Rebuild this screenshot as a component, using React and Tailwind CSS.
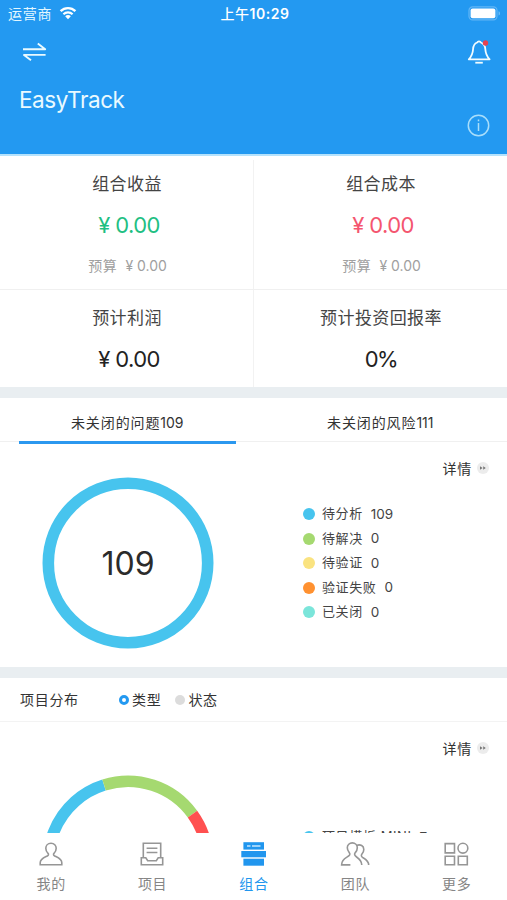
import React, { useState } from 'react';

const issueLegend = [
  { label: '待分析', value: 109, dot: 'bg-[#47c4ee]' },
  { label: '待解决', value: 0, dot: 'bg-[#a5d970]' },
  { label: '待验证', value: 0, dot: 'bg-[#fae380]' },
  { label: '验证失败', value: 0, dot: 'bg-[#ff9130]' },
  { label: '已关闭', value: 0, dot: 'bg-[#7be5da]' },
];

// Point on a circle, angle in degrees clockwise from the top
const point = (cx, cy, r, deg) => {
  const a = (deg * Math.PI) / 180;
  return `${cx + r * Math.sin(a)} ${cy - r * Math.cos(a)}`;
};

const arc = (from, to) =>
  `M${point(86, 86, 79.7, from)} A79.7 79.7 0 0 1 ${point(86, 86, 79.7, to)}`;

const StatusBar = () => (
  <div className="grid grid-cols-3 items-center h-[27px] pl-[8px] pr-[6px] text-white text-[14px]">
    <div className="flex items-center gap-[7px] text-[#e2f7ff]">
      <span className="tracking-[0.8px]">运营商</span>
      <svg width="18" height="14" viewBox="0 0 18 14" className="-mt-px">
        <path d="M1.6 5.1a10.6 10.6 0 0 1 14.8 0" fill="none" stroke="#fff" strokeWidth="2.4" />
        <path d="M4.4 8.2a6.6 6.6 0 0 1 9.2 0" fill="none" stroke="#fff" strokeWidth="2.1" />
        <path d="M6.2 10.2a3.9 3.9 0 0 1 5.6 0L9 13.2z" fill="#fff" />
      </svg>
    </div>
    <div className="text-center font-semibold whitespace-nowrap text-[14px] tracking-[0.5px] pl-px">
      <span className="font-medium">上午</span>10:29
    </div>
    <div className="flex justify-end">
      <svg width="33" height="15" viewBox="0 0 33 15">
        <rect x="1" y="0.9" width="28" height="13" rx="3.6" fill="none" stroke="#62b6f6" strokeWidth="1.2" />
        <rect x="2.6" y="2.6" width="24.8" height="9.6" rx="2" fill="#fff" />
        <path d="M30.6 5.2c1.7.6 1.7 3.8 0 4.4z" fill="#78c2f8" />
      </svg>
    </div>
  </div>
);

const Header = () => (
  <header className="h-[156px] bg-[#2399f1] border-b-2 border-[#b5e2fc]">
    <StatusBar />
    <div className="flex justify-between items-start h-[58px] pl-[22px] pr-[15px] pt-[12px]">
      <svg width="25" height="24" viewBox="0 0 25 24" fill="none" stroke="#eafaff" strokeWidth="1.9">
        <path d="M1 10.3h22.2L15.8 4.6" strokeLinejoin="round" />
        <path d="M23.6 15.9H2l7 5.4" strokeLinejoin="round" />
      </svg>
      <svg width="26" height="26" viewBox="0 0 26 26" fill="none" stroke="#f2fcff" strokeWidth="1.8">
        <path
          d="M13 2.3c-1 0-1.2.8-1.9 1.2C8.5 4.6 7.3 6.9 7.100 10c-.3 4.6-.8 6.600-4.300 10.300h20.800c-3.500-3.700-4-5.700-4.300-10.300-.2-3.100-1.700-5.400-4.400-6.500C14.200 3.100 14 2.300 13 2.300z"
          strokeLinejoin="round"
        />
        <path d="M9.300 23.700h7.500" />
        <circle cx="19.500" cy="4" r="2.700" fill="#e8424f" stroke="none" />
      </svg>
    </div>
    <div className="flex justify-between pl-[19px] pr-[17px]">
      <h1 className="text-[22.5px] leading-[30px] tracking-[-0.450px] text-[#eafaff]">EasyTrack</h1>
      <svg width="23" height="23" viewBox="0 0 23 23" fill="none" stroke="#a9defb" strokeWidth="1.5" className="mt-[29px]">
        <circle cx="11.500" cy="11.500" r="10.200" />
        <path d="M11.500 9v8M11.500 5.400v1.900" />
      </svg>
    </div>
  </header>
);

const Stat = ({ title, value, color, budget }) => (
  <div className="flex-1 flex flex-col items-center pl-px">
    <div className="text-[17px] leading-[24px] tracking-[0.4px] text-[#444]">{title}</div>
    <div className={`mt-[13px] text-[22px] leading-[32px] ${color}`}>{value}</div>
    {budget && (
      <div className="mt-[15px] pl-px text-[14px] leading-[20px] text-[#a0a0a0] whitespace-pre">
        <span className="tracking-[0.7px]">预算</span>
        {'  ' + budget}
      </div>
    )}
  </div>
);

const Details = () => (
  <div className="flex items-center justify-end gap-[5px] pr-[18px] h-[20px] text-[14px] tracking-[0.7px] text-[#333]">
    详情
    <svg width="12" height="12" viewBox="0 0 12 12">
      <circle cx="6" cy="6" r="6" fill="#ececec" />
      <path d="M3 4.200L5.600 6 3 7.800zM6.200 4.200L8.800 6 6.200 7.800z" fill="#777" />
    </svg>
  </div>
);

const Legend = ({ items }) => (
  <div className="flex flex-col gap-[4.500px]">
    {items.map((item) => (
      <div key={item.label} className="flex items-center h-[20px] text-[13px] text-[#444] whitespace-nowrap">
        <span className={`size-[12px] rounded-full mr-[7px] ${item.dot}`}></span>
        <span className="tracking-[0.6px]">{item.label}</span>
        <span className="ml-[8px] text-[13.500px]">{item.value}</span>
      </div>
    ))}
  </div>
);

const tabs = [
  {
    name: '我的',
    icon: (
      <path d="M13 2.200c-3.200 0-5.200 2.300-5.200 5.100 0 2.400 1 3.900 2.200 5 .9 1 .5 2.100-.7 2.700C6 16.600 2.200 17.800 2.200 21.800v2h21.600v-2c0-4-3.800-5.200-7.100-6.800-1.200-.6-1.600-1.700-.7-2.700 1.200-1.100 2.200-2.600 2.200-5 0-2.800-2-5.100-5.200-5.100z" />
    ),
  },
  {
    name: '项目',
    icon: (
      <g>
        <path d="M4.300 16V2.200h17.400V16" />
        <path d="M7.600 7.200h10.800M7.600 11.500h10.800" />
        <path d="M2.300 23.800v-7h4.500l1.900 3h8.600l1.900-3h4.500v7z" />
      </g>
    ),
  },
  {
    name: '组合',
    icon: (
      <g stroke="none" fill="#2196ee">
        <path d="M3.400 1.200h20.600v7.400H3.400z" />
        <path d="M1.300 10h24.700v6.300H1.300z" />
        <path d="M3.400 17.700h20.600v7H3.400z" />
        <path d="M7 4.200h3.500v1.500H7zM12 4.200h8.500v1.500H12z" fill="#c5e6fd" />
      </g>
    ),
  },
  {
    name: '团队',
    icon: (
      <g>
        <path d="M8.400 23.900H-.4c0-4 2.100-6 5.300-7.800 2.900-1.600 3.800-2.700 2.300-4.700-1.200-1.600-1.900-2.900-1.900-4.700 0-2.900 2.200-4.800 5-4.800s5 1.900 5 4.800c0 2.200-.8 3.600-2 4.900-1.200 1.600-.9 2.900 1.300 4.400 2.800 1.900 5.100 4 5.200 8" />
        <path d="M14.600 4.400c3.900-1.500 7.200.6 7.200 4 0 2-.8 3.200-1.700 4.300-1.200 1.600-1 2.800 1 4.100 3.200 1.900 5.600 3.600 5.600 7.200" />
      </g>
    ),
  },
  {
    name: '更多',
    icon: (
      <g>
        <path d="M2.200 2.600h9.300v9.300H2.200zM2.200 15.300h9.300v8.500H2.200zM15.300 15.300h9v8.500h-9z" />
        <circle cx="19.900" cy="7.200" r="4.900" />
      </g>
    ),
  },
];

const TabBar = () => (
  <nav className="grid grid-cols-5 h-[67px] bg-white shrink-0">
    {tabs.map((tab) => (
      <div key={tab.name} className="flex flex-col items-center pt-[8px]">
        <svg width="26" height="26" viewBox="0 0 26 26" fill="none" stroke="#969696" strokeWidth="1.600" overflow="visible">
          {tab.icon}
        </svg>
        <span
          className={
            'mt-[7px] pl-px text-[14px] leading-[20px] tracking-[0.7px] ' +
            (tab.name === '组合' ? 'text-[#2196ee]' : 'text-[#858585]')
          }
        >
          {tab.name}
        </span>
      </div>
    ))}
  </nav>
);

const App = () => {
  const [group, setGroup] = useState('类型');

  return (
    <div className="w-[507px] h-[900px] flex flex-col overflow-hidden bg-white font-['Inter','Noto_Sans_CJK_SC',sans-serif]">
      <Header />

      <main className="flex-1 min-h-0 overflow-hidden">
        <section className="divide-y divide-[#f0f0f0]">
          <div className="flex h-[134px] pt-[16px]">
            <Stat title="组合收益" value="¥ 0.00" color="text-[#1fbf83] tracking-[-0.6px] pl-[4px]" budget="¥ 0.00" />
            <div className="w-px -mt-[12px] bg-[#f2f2f2]"></div>
            <Stat title="组合成本" value="¥ 0.00" color="text-[#f4556f] tracking-[-0.6px] pl-[4px]" budget="¥ 0.00" />
          </div>
          <div className="flex h-[97px] pt-[16px]">
            <Stat title="预计利润" value="¥ 0.00" color="text-[#222] tracking-[-0.6px] pl-[4px]" />
            <div className="w-px -mt-[16px] bg-[#f2f2f2]"></div>
            <Stat title="预计投资回报率" value="0%" color="text-[#222] tracking-[-1.6px]" />
          </div>
        </section>

        <div className="h-[11px] bg-[#e9eef1]"></div>

        <section className="h-[269px]">
          <div className="grid grid-cols-2 h-[44px] border-b border-[#f0f0f0] text-[14px] text-[#333]">
            <div className="pl-[19px] pr-[18px]">
              <div className="h-[46px] flex items-center justify-center border-b-[3px] border-[#2b98ef]">
                <span className="pt-[5px]"><span className="tracking-[0.9px]">未关闭的问题</span>109</span>
              </div>
            </div>
            <div className="h-[46px] pt-[2px] flex items-center justify-center">
              <span><span className="tracking-[0.9px]">未关闭的风险</span>111</span>
            </div>
          </div>
          <div className="pt-[16px]">
            <Details />
          </div>
          <div className="flex">
            <div className="w-[303px] pl-[41.5px] -mt-px">
              <svg width="172" height="172" viewBox="0 0 172 172">
                <circle cx="86" cy="86" r="79.700" fill="none" stroke="#47c4ee" strokeWidth="11.600" />
                <text x="86" y="97.500" textAnchor="middle" fontSize="32" fill="#2b2b2b">109</text>
              </svg>
            </div>
            <div className="pt-[26px]">
              <Legend items={issueLegend} />
            </div>
          </div>
        </section>

        <div className="h-[11px] bg-[#e9eef1]"></div>

        <section>
          <div className="flex items-center h-[44px] pl-[20px] border-b border-[#f3f3f3] text-[14px] tracking-[0.700px] text-[#333]">
            <span className="w-[99px]">项目分布</span>
            <button onClick={() => setGroup('类型')} className="flex items-center gap-[3px] mr-[14px]">
              <span className={'size-[10px] rounded-full ' + (group === '类型' ? 'border-3 border-[#2399f1]' : 'bg-[#dcdcdc]')}></span>
              类型
            </button>
            <button onClick={() => setGroup('状态')} className="flex items-center gap-[3px]">
              <span className={'size-[10px] rounded-full ' + (group === '状态' ? 'border-3 border-[#2399f1]' : 'bg-[#dcdcdc]')}></span>
              状态
            </button>
          </div>
          <div className="pt-[16px]">
            <Details />
          </div>
          <div className="flex">
            <div className="w-[303px] pl-[41.5px] pt-[17px]">
              <svg width="172" height="172" viewBox="0 0 172 172" fill="none" strokeWidth="11.600">
                <path d={arc(-120, -17.500)} stroke="#47c4ee" />
                <path d={arc(-17.500, 54)} stroke="#a5d970" />
                <path d={arc(54, 120)} stroke="#ff5050" />
              </svg>
            </div>
            <div className="pt-[69px]">
              <Legend items={[{ label: '项目模板 MINI', value: 7, dot: 'bg-[#47c4ee]' }]} />
            </div>
          </div>
        </section>
      </main>

      <TabBar />
    </div>
  );
};

export default App;
